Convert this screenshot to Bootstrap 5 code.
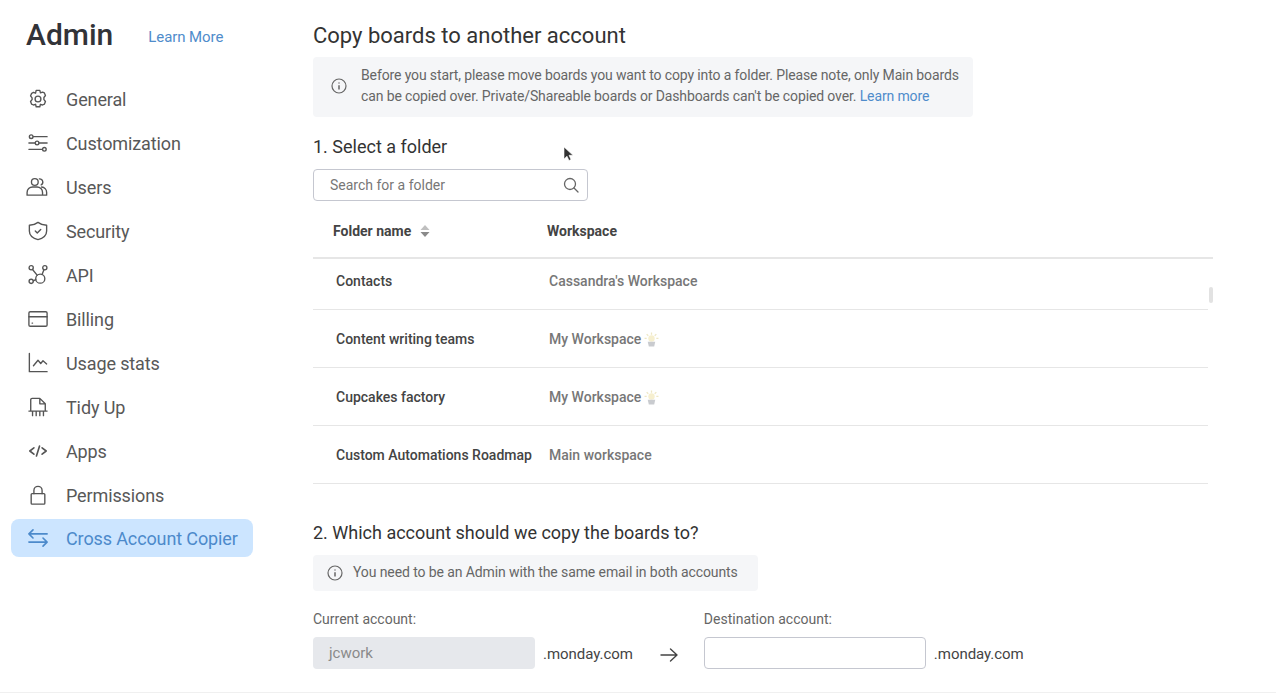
<!DOCTYPE html>
<html lang="en">
<head>
<meta charset="utf-8">
<title>Admin</title>
<link rel="stylesheet" href="https://cdn.jsdelivr.net/npm/bootstrap@5.3.0/dist/css/bootstrap.min.css">
<style>
html,body{height:694px;overflow:hidden}
body{font-family:Roboto,"Liberation Sans",sans-serif;color:#3b3b3b;background:#fff;position:relative}
.shell{height:693px;border-bottom:1px solid #f0f0f0}
.side{width:313px;flex:none;padding:0 60px 0 11px}
.side-top{height:70px;padding-left:15px;margin-bottom:9px}
.side-title{font-size:30px;font-weight:500;line-height:36px;color:#323338;margin:0}
.learn{font-size:15px;color:#4f8ccb;text-decoration:none;margin-left:35px;position:relative;top:2px;letter-spacing:-.08px}
.nav-col{gap:6px}
.nav-row{height:38px;padding:2px 0 0 17px;border-radius:8px;font-size:18px;color:#585858;text-decoration:none;letter-spacing:-.12px}
.nav-row svg{width:20px;height:20px;flex:none;margin-right:18px;fill:none;stroke:#555;stroke-width:1.5;stroke-linecap:round;stroke-linejoin:round;overflow:visible}
.nav-row.nav-on{background:#cce5ff;color:#4c8acb;padding-top:0}
.nav-on svg{stroke:#4c8acb;stroke-width:1.8}
.main-col{flex:1;min-width:0;padding-right:63px}
.pg-title{font-size:22px;font-weight:400;line-height:26px;margin:23px 0 8px;color:#333}
.note{background:#f5f6f8;border-radius:4px;color:#666;font-size:14px}
.note a{color:#4f8ccb;text-decoration:none}
.note-a{width:660px;height:60px;padding:0 0 2px 18px;line-height:21px;letter-spacing:-.125px;white-space:nowrap}
.note-a svg{margin-right:14px}
.note-b{width:445px;height:36px;padding:0 14px 1px;margin-top:11px;letter-spacing:-.1px}
.note-b svg{margin-right:10px}
.ic-info{width:16px;height:16px;flex:none;fill:none;stroke:#666;stroke-width:1.2}
.sec-title{font-size:18px;font-weight:400;line-height:22px;color:#333;margin:0}
.sec-one{margin-top:19px}
.search-box{width:275px;height:32px;border:1px solid #c5c7d0;border-radius:4px;margin-top:11px;padding:0 8px 0 16px;font-size:14px;color:#777}
.search-box svg{width:16px;height:16px;fill:none;stroke:#666;stroke-width:1.3;stroke-linecap:round}
.head-row{height:58px;padding-top:4px;border-bottom:2px solid #e6e6e6;font-size:14px;font-weight:700;color:#444}
.cell-a{width:234px;padding-left:20px;flex:none}
.sort-ic{width:10px;height:14px;margin-left:9px;fill:#8a8a8a}
.list-wrap{width:100%;position:relative}
.data-row{height:58px;padding-top:2px;width:895px;border-bottom:1px solid #e6e6e6;font-size:14px;color:#444}
.data-row.data-first{height:51px;padding:0 0 6px}
.data-row .c1{width:236px;padding-left:23px;flex:none;font-weight:500;white-space:nowrap}
.data-row .c2{color:#777;font-weight:500}
.emo{width:15px;height:15px;margin-left:3px}
.scroll-thumb{position:absolute;right:0;top:28px;width:4px;height:16px;border-radius:2px;background:#e2e2e2}
.sec-two{margin-top:38px}
.field-lab{font-size:14px;color:#666;line-height:18px;margin-bottom:8px}
.acct{margin-top:19px}
.fake-in{width:222px;height:32px;border-radius:4px}
.fake-off{background:#e6e8ec;color:#8a8a8a;font-size:15px;padding-left:16px;margin-top:0}
.fake-on{border:1px solid #c5c7d0;background:#fff;padding:0}
.suffix{font-size:15px;color:#444;margin-left:8px;line-height:32px;padding-top:2px;letter-spacing:-.04px}
.arrow-ic{width:18px;height:16px;margin:3px 26px 0 27px;fill:none;stroke:#444;stroke-width:1.4;stroke-linecap:round;stroke-linejoin:round}
.pointer{position:absolute;left:563px;top:146px;width:11px;height:16px;fill:#333;stroke:#fff;stroke-width:.6}
</style>
</head>
<body>
<div class="shell d-flex">
  <aside class="side">
    <div class="side-top d-flex align-items-center">
      <h1 class="side-title">Admin</h1>
      <a class="learn" href="#">Learn More</a>
    </div>
    <nav class="nav-col d-flex flex-column">
      <a class="nav-row d-flex align-items-center" href="#"><svg viewBox="0 0 22 22"><path d="M9 1.500h4l.7 2.700 2.300-.8 2 .9 1.200 2.900-1.700 2.100v2.400l1.700 2.100-1.200 2.900-2 .9-2.300-.8-.7 2.700H9l-.7-2.700-2.300.8-2-.9-1.200-2.900 1.700-2.100V9.700L2.800 7.600 4 4.700l2-.9 2.300.8z"/><circle cx="11" cy="11" r="3.200"/></svg>General</a>
      <a class="nav-row d-flex align-items-center" href="#"><svg viewBox="0 0 22 22"><path d="M6 4h15M1 11h7M12 11h9M1 18h14"/><circle cx="3.500" cy="4" r="2"/><circle cx="10" cy="11" r="2"/><circle cx="18" cy="18" r="2"/></svg>Customization</a>
      <a class="nav-row d-flex align-items-center" href="#"><svg viewBox="0 0 22 22"><circle cx="7.500" cy="5.500" r="3.700"/><path d="M12.500 2a3.600 3.600 0 0 1 2 6.700M-1 20v-3a6 6 0 0 1 6-6h5a6 6 0 0 1 6 6v3zM15 11a6 6 0 0 1 5.500 6v3H16"/></svg>Users</a>
      <a class="nav-row d-flex align-items-center" href="#"><svg viewBox="0 0 22 22"><path d="M11 1.500c2.500 2 5.700 3 9.500 3.200V11c0 4.700-3.800 8-9.500 9.500C5.300 19 1.500 15.700 1.500 11V4.700C5.300 4.500 8.500 3.500 11 1.500z"/><path d="M8 11l2.200 2.200L14 9.300"/></svg>Security</a>
      <a class="nav-row d-flex align-items-center" href="#"><svg viewBox="0 0 22 22"><circle cx="13.500" cy="15" r="5"/><circle cx="3.500" cy="3" r="2.300"/><circle cx="18.500" cy="3" r="2.300"/><circle cx="3.500" cy="18" r="2.300"/><path d="M5 5l5 6.200M17.500 5.300l-2 5.200M5.800 17.500l2.700-1.500"/></svg>API</a>
      <a class="nav-row d-flex align-items-center" href="#"><svg viewBox="0 0 22 22"><rect x="1" y="3" width="20" height="16" rx="1.500"/><path d="M1 8.500h20M4.500 15.500h.5"/></svg>Billing</a>
      <a class="nav-row d-flex align-items-center" href="#"><svg viewBox="0 0 22 22"><path d="M1.500 .5V20.500H21M6 14l5-6 3 3.500 2.500-3 4 3.500"/></svg>Usage stats</a>
      <a class="nav-row d-flex align-items-center" href="#"><svg viewBox="0 0 22 22"><path d="M3 15V3A1.500 1.500 0 0 1 4.500 1.500H13L19 7.500V15M13 1.500v6h6M1 15.500h20M5 16v4.500M9 16v4.500M13 16v4.500M17 16v4.500"/></svg>Tidy Up</a>
      <a class="nav-row d-flex align-items-center" href="#"><svg viewBox="0 0 22 22"><path d="M6.500 7.500L2 11l4.500 3.500M15.500 7.500L20 11l-4.500 3.500M12.700 5.500l-3.400 11" stroke-width="1.800"/></svg>Apps</a>
      <a class="nav-row d-flex align-items-center" href="#"><svg viewBox="0 0 22 22"><rect x="3.500" y="9.500" width="15" height="11.500" rx="1"/><path d="M6.500 9.500V6a4.500 4.500 0 0 1 9 0v3.500"/></svg>Permissions</a>
      <a class="nav-row nav-on d-flex align-items-center" href="#"><svg viewBox="0 0 22 22"><path d="M1 6.500h20M5.500 2L1 6.500 5.500 11M21 15.500H1M16.500 11l4.500 4.500-4.500 4.500"/></svg>Cross Account Copier</a>
    </nav>
  </aside>
  <main class="main-col">
    <h2 class="pg-title">Copy boards to another account</h2>
    <div class="note note-a d-flex align-items-center">
      <svg class="ic-info" viewBox="0 0 16 16"><circle cx="8" cy="8" r="7"/><path d="M8 7.200v4.200M8 4.500v1" stroke-width="1.500"/></svg>
      <div>Before you start, please move boards you want to copy into a folder. Please note, only Main boards<br>can be copied over. Private/Shareable boards or Dashboards can't be copied over. <a href="#">Learn more</a></div>
    </div>
    <h3 class="sec-title sec-one">1. Select a folder</h3>
    <div class="search-box d-flex align-items-center justify-content-between"><span>Search for a folder</span><svg viewBox="0 0 16 16"><circle cx="7" cy="7" r="5.500"/><path d="M11 11l4 4"/></svg></div>
    <div class="head-row d-flex align-items-center">
      <div class="cell-a d-flex align-items-center">Folder name<svg class="sort-ic" viewBox="0 0 10 14"><path d="M5 1l4.500 5H.5z" opacity=".55"/><path d="M.5 8h9L5 13z"/></svg></div>
      <div>Workspace</div>
    </div>
    <div class="list-wrap">
      <div class="data-row data-first d-flex align-items-center"><div class="c1">Contacts</div><div class="c2">Cassandra's Workspace</div></div>
      <div class="data-row d-flex align-items-center"><div class="c1">Content writing teams</div><div class="c2 d-flex align-items-center">My Workspace<svg class="emo" viewBox="0 0 14 14"><path d="M7 .5v2M2.500 2L4 3.500M11.500 2L10 3.500M.5 6h2M13.500 6h-2" stroke="#eee7c4" stroke-width="1.200"/><circle cx="7" cy="6" r="3" fill="#f6efcf"/><path d="M3.500 9h7l-1 4.500h-5z" fill="#c9cbcf"/></svg></div></div>
      <div class="data-row d-flex align-items-center"><div class="c1">Cupcakes factory</div><div class="c2 d-flex align-items-center">My Workspace<svg class="emo" viewBox="0 0 14 14"><path d="M7 .5v2M2.500 2L4 3.500M11.500 2L10 3.500M.5 6h2M13.500 6h-2" stroke="#eee7c4" stroke-width="1.200"/><circle cx="7" cy="6" r="3" fill="#f6efcf"/><path d="M3.500 9h7l-1 4.500h-5z" fill="#c9cbcf"/></svg></div></div>
      <div class="data-row d-flex align-items-center"><div class="c1">Custom Automations Roadmap</div><div class="c2">Main workspace</div></div>
      <div class="scroll-thumb"></div>
    </div>
    <h3 class="sec-title sec-two">2. Which account should we copy the boards to?</h3>
    <div class="note note-b d-flex align-items-center">
      <svg class="ic-info" viewBox="0 0 16 16"><circle cx="8" cy="8" r="7"/><path d="M8 7.200v4.200M8 4.500v1" stroke-width="1.500"/></svg>
      <span>You need to be an Admin with the same email in both accounts</span>
    </div>
    <div class="acct d-flex align-items-start">
      <div>
        <div class="field-lab">Current account:</div>
        <div class="d-flex align-items-center"><div class="fake-in fake-off d-flex align-items-center">jcwork</div><span class="suffix">.monday.com</span><svg class="arrow-ic" viewBox="0 0 18 16"><path d="M1 8h16M10.500 2l6.500 6-6.500 6"/></svg></div>
      </div>
      <div>
        <div class="field-lab">Destination account:</div>
        <div class="d-flex align-items-center"><div class="fake-in fake-on"></div><span class="suffix">.monday.com</span></div>
      </div>
    </div>
  </main>
</div>
<svg class="pointer" viewBox="0 0 11 16"><path d="M1 1v12l3-2.800 2 4.300 2-1-2-4.200h4z"/></svg>
<script src="https://cdn.jsdelivr.net/npm/bootstrap@5.3.0/dist/js/bootstrap.bundle.min.js"></script>
</body>
</html>
